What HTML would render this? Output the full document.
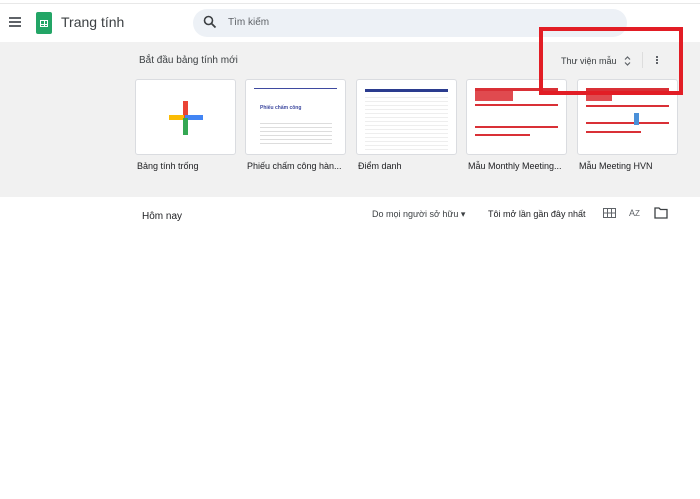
<!DOCTYPE html>
<html><head><meta charset="utf-8"><style>
body{margin:0;width:700px;height:499px;background:#fff;font-family:"Liberation Sans",Arial,sans-serif;position:relative;overflow:hidden;color:#202124}
.a{position:absolute}
.card{position:absolute;top:79px;width:99px;height:74px;background:#fff;border:1px solid #dadce0;border-radius:3px;overflow:hidden}
.lbl{position:absolute;top:160px;font-size:9px;color:#202124;white-space:nowrap}
</style></head><body>
<div class="a" style="left:0;top:0;width:700px;height:3px;border-bottom:1px solid #e8e8e8"></div>
<div class="a" style="left:0;top:42px;width:700px;height:155px;background:#f1f1f1"></div>
<div class="a" style="left:9px;top:17px;width:12px;height:2px;background:#5f6368;box-shadow:0 4px 0 #5f6368,0 8px 0 #5f6368"></div>
<div class="a" style="left:36px;top:12px;width:16px;height:22px;background:#23a566;border-radius:2px"></div>
<div class="a" style="left:40px;top:20px;width:8px;height:7px;border:1px solid #fff;box-sizing:border-box;background:linear-gradient(#fff,#fff) 3px 0/1px 100% no-repeat,linear-gradient(#fff,#fff) 0 3px/100% 1px no-repeat"></div>
<div class="a" style="left:61px;top:14px;font-size:14px;color:#3c4043">Trang tính</div>
<div class="a" style="left:193px;top:9px;width:434px;height:28px;background:#edf1f6;border-radius:14px"></div>
<svg class="a" style="left:203px;top:15px" width="14" height="14" viewBox="0 0 14 14"><circle cx="5.5" cy="5.5" r="4" fill="none" stroke="#3c4043" stroke-width="1.6"/><path d="M8.5 8.5L12.5 12.5" stroke="#3c4043" stroke-width="1.8"/></svg>
<div class="a" style="left:228px;top:17px;font-size:10px;color:#5f6368">Tìm kiếm</div>
<div class="a" style="left:139px;top:55px;font-size:10px;color:#3c4043">Bắt đầu bảng tính mới</div>
<div class="a" style="left:561px;top:56px;font-size:9px;color:#3c4043">Thư viện mẫu</div>
<svg class="a" style="left:624px;top:55px" width="7" height="12" viewBox="0 0 7 12"><path d="M1 4.5L3.5 2L6 4.5M1 7.5L3.5 10L6 7.5" fill="none" stroke="#5f6368" stroke-width="1.2"/></svg>
<div class="a" style="left:642px;top:52px;width:1px;height:16px;background:#ddd"></div>
<div class="a" style="left:656px;top:56px;width:2px;height:2px;background:#5f6368;box-shadow:0 3px 0 #5f6368,0 6px 0 #5f6368"></div>
<div class="card" style="left:135px">
 <div class="a" style="left:47px;top:21px;width:5px;height:17px;background:#ea4335"></div>
 <div class="a" style="left:33px;top:35px;width:15px;height:5px;background:#fbbc04"></div>
 <div class="a" style="left:49px;top:35px;width:18px;height:5px;background:#4285f4"></div>
 <div class="a" style="left:47px;top:38px;width:5px;height:17px;background:#34a853"></div>
</div>
<div class="card" style="left:245px">
 <div class="a" style="left:8px;top:8px;width:83px;height:1px;background:#3f4aa0"></div>
 <div class="a" style="left:14px;top:25px;font-size:5px;color:#3f4aa0;font-weight:bold">Phiếu chấm công</div>
 <div class="a" style="left:14px;top:40px;width:72px;height:26px;background:repeating-linear-gradient(#fff 0 3px,#ddd 3px 4px)"></div>
</div>
<div class="card" style="left:356px">
 <div class="a" style="left:8px;top:9px;width:83px;height:3px;background:#2b3c8f"></div>
 <div class="a" style="left:8px;top:14px;width:83px;height:58px;background:repeating-linear-gradient(#fff 0 3px,#eee 3px 4px)"></div>
</div>
<div class="card" style="left:466px">
 <div class="a" style="left:8px;top:8px;width:83px;height:3px;background:#d93036"></div>
 <div class="a" style="left:8px;top:11px;width:38px;height:10px;background:#e04a4f"></div>
 <div class="a" style="left:8px;top:24px;width:83px;height:2px;background:#d93036"></div>
 <div class="a" style="left:8px;top:46px;width:83px;height:2px;background:#d93036"></div>
 <div class="a" style="left:8px;top:54px;width:55px;height:2px;background:#d93036"></div>
</div>
<div class="card" style="left:577px">
 <div class="a" style="left:8px;top:8px;width:83px;height:3px;background:#d93036"></div>
 <div class="a" style="left:8px;top:11px;width:26px;height:10px;background:#e04a4f"></div>
 <div class="a" style="left:8px;top:25px;width:83px;height:2px;background:#d93036"></div>
 <div class="a" style="left:8px;top:42px;width:83px;height:2px;background:#d93036"></div>
 <div class="a" style="left:8px;top:51px;width:55px;height:2px;background:#d93036"></div>
 <div class="a" style="left:56px;top:33px;width:5px;height:12px;background:#4a90d9"></div>
</div>
<div class="lbl" style="left:137px;top:161px">Bảng tính trống</div>
<div class="lbl" style="left:247px;top:161px">Phiếu chấm công hàn...</div>
<div class="lbl" style="left:358px;top:161px">Điểm danh</div>
<div class="lbl" style="left:468px;top:161px">Mẫu Monthly Meeting...</div>
<div class="lbl" style="left:579px;top:161px">Mẫu Meeting HVN</div>
<div class="a" style="left:539px;top:27px;width:136px;height:60px;border:4px solid #e21d25"></div>
<div class="a" style="left:142px;top:211px;font-size:10px;color:#202124">Hôm nay</div>
<div class="a" style="left:372px;top:209px;font-size:9px;color:#3c4043">Do mọi người sở hữu ▾</div>
<div class="a" style="left:488px;top:209px;font-size:9px;color:#202124">Tôi mở lần gần đây nhất</div>
<svg class="a" style="left:603px;top:208px" width="13" height="10" viewBox="0 0 13 10"><rect x="0.5" y="0.5" width="12" height="9" fill="none" stroke="#5f6368"/><path d="M4.5 0v10M8.5 0v10M0 5h13" stroke="#5f6368"/></svg>
<div class="a" style="left:629px;top:208px;font-size:9px;color:#5f6368">A<span style="font-size:8px">Z</span></div>
<svg class="a" style="left:654px;top:207px" width="14" height="12" viewBox="0 0 14 12"><path d="M1 1h4l1.5 1.5H13V11H1z" fill="none" stroke="#3c4043" stroke-width="1.3"/></svg>
</body></html>
